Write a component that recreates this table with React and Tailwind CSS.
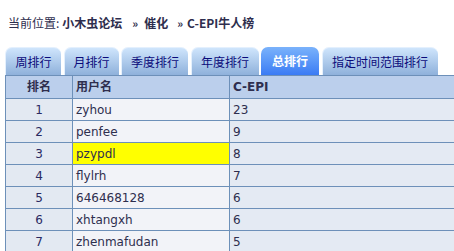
const tabs = [
    { label: '周排行', w: 'w-[56px]' },
    { label: '月排行', w: 'w-[55px]' },
    { label: '季度排行', w: 'w-[67px]' },
    { label: '年度排行', w: 'w-[68px]' },
    { label: '总排行', w: 'w-[58px]', active: true },
    { label: '指定时间范围排行', w: 'w-[116px]' },
];

const rows = [
    { rank: 1, name: 'zyhou', score: 23 },
    { rank: 2, name: 'penfee', score: 9 },
    { rank: 3, name: 'pzypdl', score: 8, mark: true },
    { rank: 4, name: 'flylrh', score: 7 },
    { rank: 5, name: '646468128', score: 6 },
    { rank: 6, name: 'xhtangxh', score: 6 },
    { rank: 7, name: 'zhenmafudan', score: 5 },
];

export default function App() {
    return (
        <div className="h-[251px] w-[454px] overflow-hidden bg-white font-['DejaVu_Sans','Noto_Sans_CJK_SC',sans-serif] text-[12px] text-[#2e2e4e]">
            <div className="flex h-[42px] items-center pl-[8px] pt-[4px] font-['Noto_Sans_CJK_SC',sans-serif]">
                <span>当前位置:</span>
                <b className="ml-[3px]">小木虫论坛</b>
                <b className="ml-[10px] text-[11px]">»</b>
                <b className="ml-[6px]">催化</b>
                <b className="ml-[9px] text-[11px]">»</b>
                <b className="ml-[4px]">C-EPI牛人榜</b>
            </div>

            <div className="ml-[5px] mt-[5px] flex h-[28px] gap-[2.5px]">
                {tabs.map((tab) => (
                    <div
                        key={tab.label}
                        className={
                            tab.active
                                ? `${tab.w} flex items-center justify-center rounded-t-[7px] bg-gradient-to-b from-[#7ab2fb] to-[#3b7bf4] font-['Noto_Sans_CJK_SC',sans-serif] font-bold text-white`
                                : `${tab.w} flex items-center justify-center rounded-t-[7px] border-l border-t border-[#e4f0fd] bg-gradient-to-b from-[#cfe5fc] to-[#8fb1db] font-['Noto_Sans_CJK_SC',sans-serif] text-[#0a0a7a]`
                        }
                    >
                        {tab.label}
                    </div>
                ))}
            </div>

            <table className="ml-[5px] w-[470px] border-collapse">
                <thead>
                    <tr className="h-[23px] bg-[#bbcfec]">
                        <th className="w-[67px] border border-[#6d90b9] text-center font-bold">排名</th>
                        <th className="w-[157px] border border-[#6d90b9] pl-[3px] text-left font-bold">用户名</th>
                        <th className="border border-[#6d90b9] pl-[3px] text-left font-bold">C-EPI</th>
                    </tr>
                </thead>
                <tbody>
                    {rows.map((row) => (
                        <tr key={row.rank} className="h-[22px]">
                            <td className="border border-[#6d90b9] bg-[#e3e9f2] text-center text-[#2a2a62]">{row.rank}</td>
                            <td className={`border border-[#6d90b9] pl-[3px] ${row.mark ? 'bg-[#ffff00]' : 'bg-[#f2f3f8]'}`}>{row.name}</td>
                            <td className="border border-[#6d90b9] bg-[#e4eaf3] pl-[3px]">{row.score}</td>
                        </tr>
                    ))}
                </tbody>
            </table>
        </div>
    );
}
